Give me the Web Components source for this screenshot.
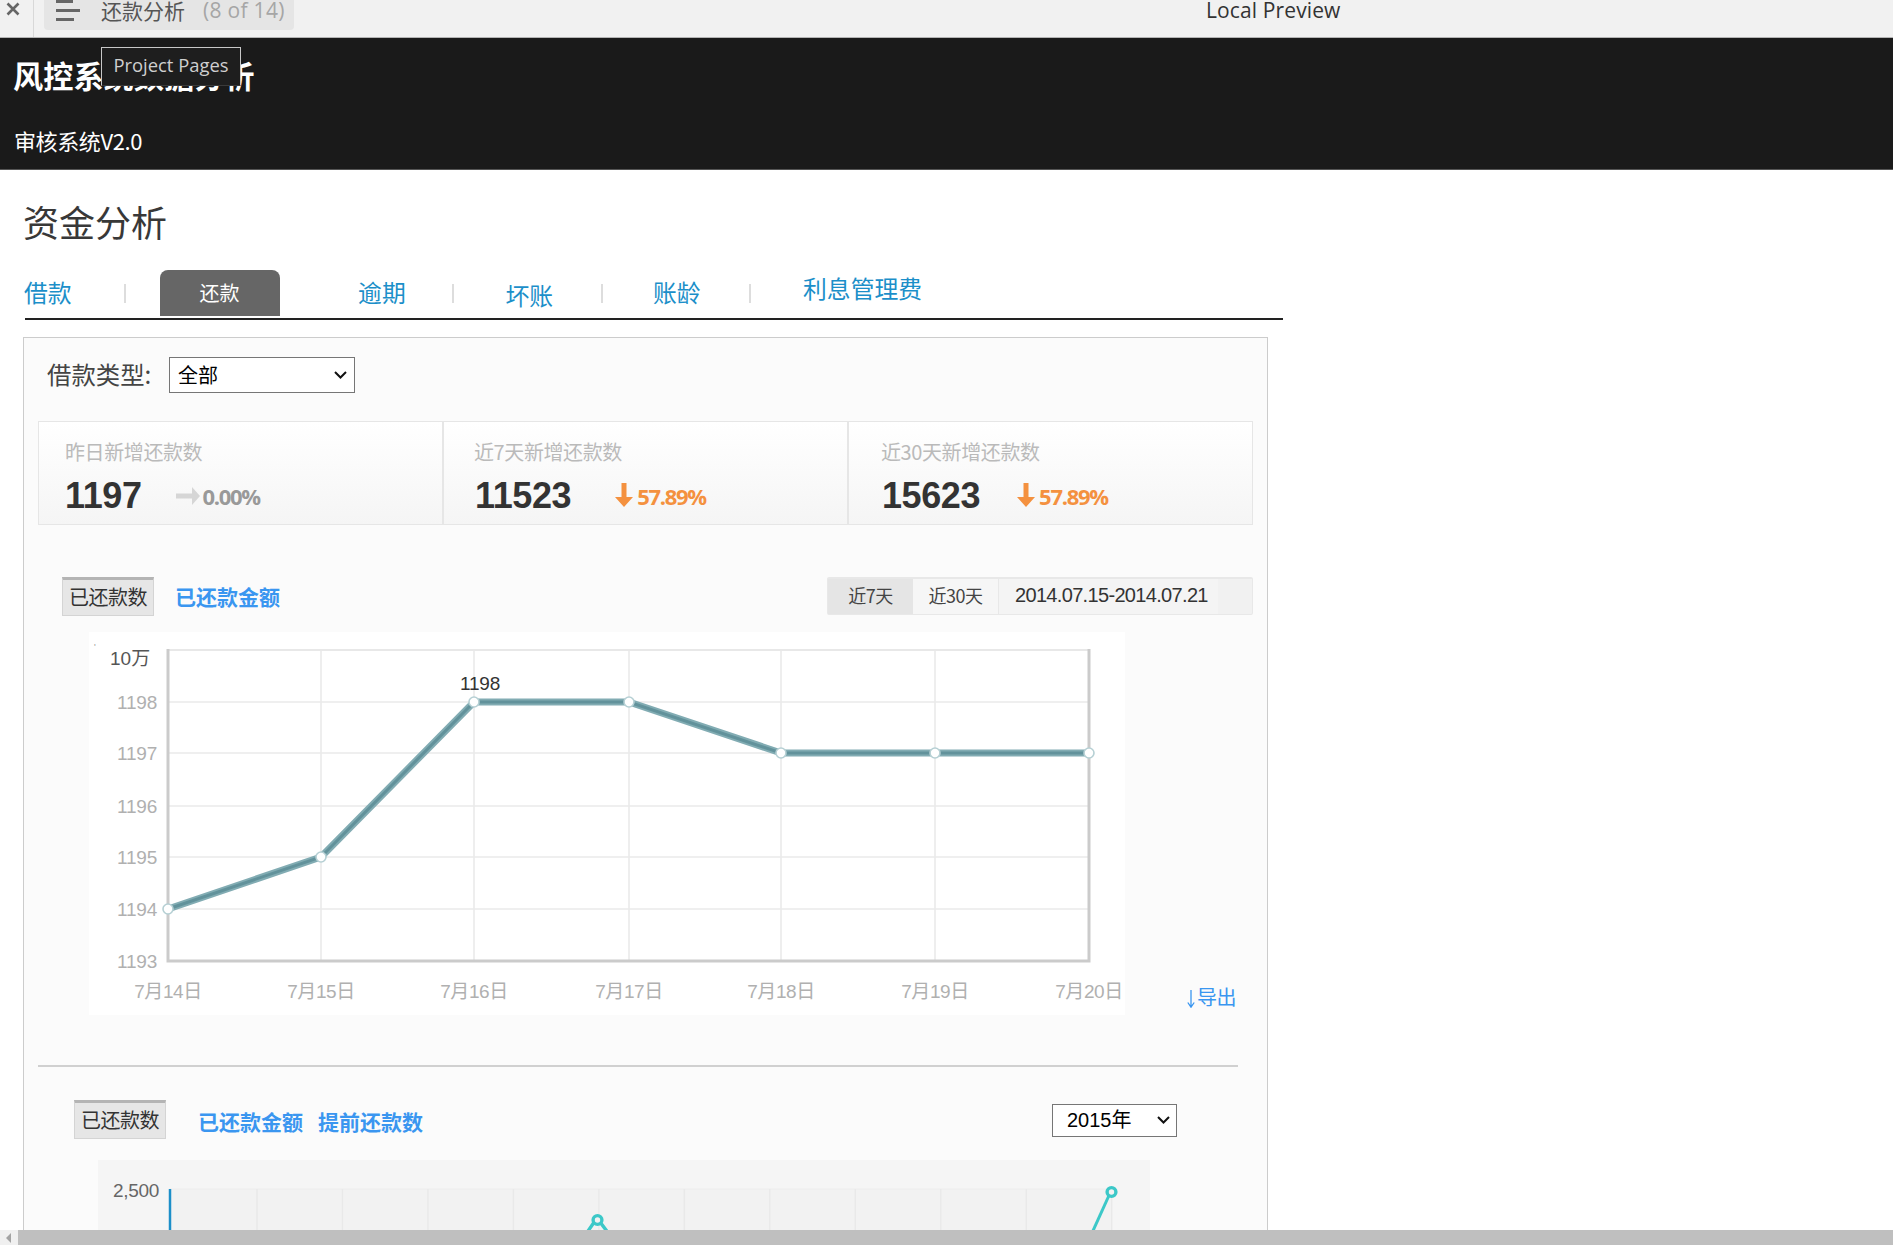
<!DOCTYPE html>
<html lang="zh-CN">
<head>
<meta charset="utf-8">
<title>还款分析</title>
<style>
  html, body { margin: 0; height: 100%; overflow: hidden; background: #fff; }
  body { font-family: "Noto Sans CJK SC", "Liberation Sans", sans-serif; }
  preview-page { display: flex; flex-direction: column; height: 100vh; }
</style>
</head>
<body>
<preview-page>
  <preview-bar title-text="还款分析" count="(8 of 14)" label="Local Preview"></preview-bar>
  <site-header title-text="风控系统数据分析" sub="审核系统V2.0" tip="Project Pages"></site-header>
  <page-body>
    <h-title>资金分析</h-title>
    <tab-strip>
      <tab-item lift="11" style="--gap:-1px">借款</tab-item>
      <tab-sep style="--gap:52.5px"></tab-sep>
      <tab-item active style="--gap:33.5px">还款</tab-item>
      <tab-item lift="11" style="--gap:78.5px">逾期</tab-item>
      <tab-sep style="--gap:46px"></tab-sep>
      <tab-item lift="8" style="--gap:51.8px">坏账</tab-item>
      <tab-sep style="--gap:48px"></tab-sep>
      <tab-item lift="11" style="--gap:49.8px">账龄</tab-item>
      <tab-sep style="--gap:49px"></tab-sep>
      <tab-item lift="15" style="--gap:51.6px">利息管理费</tab-item>
    </tab-strip>
    <main-panel>
      <filter-row label="借款类型:" value="全部"></filter-row>
      <stat-row>
        <stat-cell style="--w:405px;--pl:26px;--pm:3px;--nm:0px" label="昨日新增还款数" value="1197" trend="flat" pct="0.00%" gap="34"></stat-cell>
        <stat-cell style="--w:405px;--pl:30px" label="近7天新增还款数" value="11523" trend="down" pct="57.89%" gap="44"></stat-cell>
        <stat-cell style="--w:403px;--pl:32px" last label="近30天新增还款数" value="15623" trend="down" pct="57.89%" gap="37"></stat-cell>
      </stat-row>
      <chart-toolbar style="--top:52px;--left:24px">
        <tab-chip>已还款数</tab-chip>
        <tab-link style="--gap:21px">已还款金额</tab-link>
        <date-range slot="end"></date-range>
      </chart-toolbar>
      <line-section></line-section>
      <section-rule></section-rule>
      <chart-toolbar style="--top:33px;--left:36px">
        <tab-chip>已还款数</tab-chip>
        <tab-link style="--gap:32px;--drop:2.4px">已还款金额</tab-link>
        <tab-link style="--gap:15px;--drop:2.4px">提前还款数</tab-link>
        <year-select slot="end"></year-select>
      </chart-toolbar>
      <area-chart></area-chart>
    </main-panel>
  </page-body>
  <h-scroll></h-scroll>
</preview-page>

<script>
const CJK = '"Noto Sans CJK SC", "Liberation Sans", sans-serif';
const ARIAL = '"Liberation Sans", "Noto Sans CJK SC", sans-serif';
const OPEN = '"Open Sans", "Noto Sans CJK SC", sans-serif';
const CHEVRON = `<svg class="chev" width="13" height="8" viewBox="0 0 13 8"><path d="M1 1l5.5 5.5L12 1" fill="none" stroke="#111" stroke-width="2"/></svg>`;

function def(name, html) {
  customElements.define(name, class extends HTMLElement {
    connectedCallback() {
      if (this.shadowRoot) return;
      const root = this.attachShadow({ mode: 'open' });
      const attr = (k, d = '') => this.getAttribute(k) ?? d;
      root.innerHTML = typeof html === 'function' ? html(attr, this) : html;
    }
  });
}

def('preview-bar', a => `
<style>
  :host { display:flex; align-items:flex-start; height:37px; flex:none; background:#f1f1f1; border-bottom:1px solid #b4b4b4; font-family:${OPEN}; }
  .close { width:27px; height:35px; padding:2px 0 0 6px; border-right:1px solid #d8d8d8; }
  .close svg { display:block; }
  .pill { margin-left:10px; width:250px; height:30px; background:#e5e5e5; border-radius:0 0 4px 4px; display:flex; align-items:center; }
  .pill svg { margin-left:12px; flex:none; }
  .t { margin-left:21px; font-size:21px; line-height:20px; color:#555; font-family:${CJK}; margin-top:-10px; }
  .c { margin-left:18px; font-size:21px; line-height:20px; color:#a6a6a6; margin-top:-10px; letter-spacing:.3px; }
  .l { margin-left:912px; font-size:21px; line-height:20px; color:#333; letter-spacing:.12px; }
</style>
<div class="close"><svg width="14" height="14" viewBox="0 0 14 14"><path d="M1.5 1.5 L12.5 12.5 M12.5 1.5 L1.5 12.5" stroke="#666" stroke-width="2.6"/></svg></div>
<div class="pill">
  <svg width="24" height="24" viewBox="0 0 24 24" style="margin-top:-6px"><rect x="0" y="0" width="17" height="3" fill="#666"/><rect x="0" y="9" width="24" height="3" fill="#666"/><rect x="0" y="18" width="18" height="3" fill="#666"/></svg>
  <span class="t">${a('title-text')}</span><span class="c">${a('count')}</span>
</div>
<span class="l">${a('label')}</span>`);

def('site-header', a => `
<style>
  :host { display:block; flex:none; height:131px; background:#1a1a1a; border-bottom:1px solid #555; position:relative; color:#fff; padding-left:13px; }
  .t { font:700 30.2px/40px ${CJK}; padding-top:17px; }
  .s { font:400 22px/24px ${CJK}; padding-top:33px; letter-spacing:-.4px; margin-left:1px; }
  .tip { position:absolute; left:101px; top:9px; width:138px; height:37px; background:#1e1e1e; border:1px solid #c8c8c8; border-bottom-color:#3a3a3a; font:18.4px/34px ${OPEN}; color:#cfcfcf; text-align:center; }
</style>
<div class="t">${a('title-text')}</div>
<div class="s">${a('sub')}</div>
<div class="tip">${a('tip')}</div>`);

def('page-body', `
<style>:host { display:block; flex:1; min-height:0; overflow:hidden; padding-left:23px; background:#fff; }</style>
<slot></slot>`);

def('h-title', `
<style>:host { display:block; font:400 36px/40px ${CJK}; color:#383838; padding-top:30.5px; }</style><slot></slot>`);

def('tab-strip', `
<style>:host { display:flex; align-items:flex-end; height:49px; width:1258px; margin-left:2px; margin-top:28.5px; border-bottom:2px solid #222; }</style><slot></slot>`);

def('tab-item', (a, el) => {
  const active = el.hasAttribute('active');
  return `<style>
  :host { display:block; margin-left:var(--gap,0); font-family:${CJK}; }
  .p { font-size:23.8px; line-height:30px; color:#1c8fc9; padding-bottom:${a('lift','10')}px; }
  .a { width:120px; height:46px; margin-bottom:2px; background:#666; color:#fff; border-radius:8px 8px 0 0; font-size:20px; line-height:45px; text-align:center; }
  </style><div class="${active ? 'a' : 'p'}"><slot></slot></div>`;
});

def('tab-sep', `
<style>:host { display:block; width:2px; height:19px; background:#ddd; margin-left:var(--gap,0); margin-bottom:15px; }</style>`);

def('main-panel', `
<style>:host { display:block; box-sizing:border-box; width:1245px; margin-top:16.5px; border:1px solid #ccc; background:#fbfbfb; padding:19px 14px 0; height:1000px; }</style><slot></slot>`);

const selectStyle = `
  .wrap { position:relative; display:block; }
  select { appearance:none; -webkit-appearance:none; display:block; color:#000; background:#fff; border:1px solid #767676; border-radius:0; box-sizing:border-box; }
  .chev { position:absolute; top:50%; margin-top:-4px; pointer-events:none; }`;

def('filter-row', a => `
<style>
  :host { display:flex; align-items:center; height:36px; padding-left:9px; font-family:${CJK}; }
  .l { font-size:24.4px; color:#444; width:122px; line-height:36px; white-space:nowrap; margin-top:-2px; }
  ${selectStyle}
  select { width:186px; height:36px; font:20px ${CJK}; padding-left:8px; }
  .chev { right:8px; }
</style>
<span class="l">${a('label')}</span><span class="wrap"><select><option>${a('value')}</option></select>${CHEVRON}</span>`);

def('stat-row', `
<style>:host { display:flex; margin-top:28px; height:104px; box-sizing:border-box; width:1215px; border:1px solid #e6e6e6; background:linear-gradient(#fff,#f5f5f5); }</style><slot></slot>`);

const ORANGE = '#f4913f';
const arrows = {
  down: `<svg width="18" height="24" viewBox="0 0 18 24" style="margin-top:-2px"><path d="M6.5 0h5v14h6.5L9 24 0 14h6.5z" fill="${ORANGE}"/></svg>`,
  flat: `<svg width="24" height="18" viewBox="0 0 24 18"><path d="M0 6.5h16V0l8 9-8 9v-6.5H0z" fill="#d6d6d6"/></svg>`
};
def('stat-cell', (a, el) => `
<style>
  :host { display:block; box-sizing:border-box; width:var(--w); padding-left:var(--pl); ${el.hasAttribute('last') ? '' : 'border-right:2px solid #e6e6e6;'} }
  .l { font:400 20px/26px ${CJK}; color:#bababa; padding-top:17px; letter-spacing:-.4px; }
  .r { display:flex; align-items:center; height:40px; margin-top:11px; }
  .v { font:700 36px/40px ${ARIAL}; color:#333; letter-spacing:-.4px; margin-left:var(--nm,1px); }
  .t { display:flex; align-items:center; margin-left:${a('gap')}px; }
  .p { font:700 22px/24px "Open Sans", "Liberation Sans", sans-serif; margin-left:var(--pm,4px); letter-spacing:-1.3px; color:${a('trend') === 'flat' ? '#999' : ORANGE}; margin-top:0; }
</style>
<div class="l">${a('label')}</div>
<div class="r"><span class="v">${a('value')}</span><span class="t">${arrows[a('trend')]}<span class="p">${a('pct')}</span></span></div>`);

def('chart-toolbar', `
<style>:host { display:flex; align-items:flex-start; margin-top:var(--top); padding-left:var(--left); height:39px; }
.e { margin-left:auto; display:block; } </style><slot></slot><div class="e"><slot name="end"></slot></div>`);

def('tab-chip', `
<style>:host { display:block; box-sizing:border-box; width:92px; height:39px; background:#e6e6e6; border:1px solid #d4d4d4; border-top:3px solid #b4b4b4; font:400 20px/34px ${CJK}; color:#333; text-align:center; letter-spacing:-.5px; white-space:nowrap; }</style><slot></slot>`);

def('tab-link', `
<style>:host { display:block; margin-left:var(--gap,0); margin-top:var(--drop,0); font:700 21px/39px ${CJK}; color:#3a96f0; white-space:nowrap; }</style><slot></slot>`);

def('date-range', `
<style>
  :host { display:flex; width:426px; height:38px; box-sizing:border-box; background:#f1f1f1; border:1px solid #e8e8e8; border-top-width:2px; border-radius:2px; font-family:${CJK}; color:#444; }
  .c { display:block; text-align:center; font-size:18px; line-height:33px; letter-spacing:-.5px; }
  .a { width:85px; background:#e5e5e5; }
  .b { width:85px; background:#f6f6f6; }
  .d { flex:1; font:20px/33px ${ARIAL}; color:#333; padding-left:16px; background:linear-gradient(90deg,#f4f4f4 90%,#f1f1f1 90%); letter-spacing:-.67px; border-left:1px solid #e8e8e8; margin-right:10px; }
</style>
<span class="c a">近7天</span><span class="c b">近30天</span><span class="d">2014.07.15-2014.07.21</span>`);

def('year-select', `
<style>
  :host { display:block; margin-right:76px; margin-top:4px; }
  ${selectStyle}
  select { width:125px; height:33px; font:20px ${ARIAL}; padding-left:14px; }
  .chev { right:7px; }
</style>
<span class="wrap"><select><option>2015年</option></select>${CHEVRON}</span>`);

const xs = [168, 321, 474, 629, 781, 935, 1089];
const ys = [702, 753, 806, 857, 909, 961];
const pts = [[168, 909], [321, 857], [474, 702], [629, 702], [781, 753], [935, 753], [1089, 753]];
const poly = pts.map(p => p.join(',')).join(' ');

def('line-section', `
<style>
  :host { display:flex; align-items:flex-end; margin-top:16px; padding-left:51px; height:383px; }
  svg { display:block; flex:none; }
  text { font-family:${ARIAL}; }
  .e { display:flex; align-items:center; font:400 20px/24px ${CJK}; color:#3a96f0; margin-left:62px; margin-bottom:6px; letter-spacing:-.4px; white-space:nowrap; }
  .e svg { margin-right:2px; margin-top:4px; }
</style>
<svg width="1036" height="383" viewBox="89 632 1036 383">
  <rect x="89" y="632" width="1036" height="383" fill="#fff"/>
  ${xs.slice(1, 6).map(x => `<line x1="${x}" x2="${x}" y1="650" y2="961" stroke="#e8e8e8" stroke-width="1.5"/>`).join('')}
  ${ys.slice(0, 5).map(y => `<line x1="168" x2="1089" y1="${y}" y2="${y}" stroke="#eaeaea" stroke-width="1.5"/>`).join('')}
  <line x1="168" x2="1089" y1="650" y2="650" stroke="#e8e8e8" stroke-width="2"/>
  <path d="M168 649V961H1089V649" fill="none" stroke="#cbcbcb" stroke-width="3"/>
  <polyline points="${poly}" fill="none" stroke="#82acb3" stroke-width="7" stroke-linejoin="round"/>
  <polyline points="${poly}" fill="none" stroke="#62929b" stroke-width="3"/>
  ${pts.map(p => `<circle cx="${p[0]}" cy="${p[1]}" r="5" fill="#fff" stroke="#b6d0d4" stroke-width="1.6"/>`).join('')}
  ${[1198, 1197, 1196, 1195, 1194, 1193].map((t, i) => `<text x="157" y="${ys[i] + 7}" text-anchor="end" font-size="19" letter-spacing="-.2" fill="#b0b0b0">${t}</text>`).join('')}
  <text x="110" y="665" font-size="19" fill="#555">10万</text>
  <text x="94" y="650" font-size="9" fill="#999">'</text>
  <text x="480" y="690" text-anchor="middle" font-size="19" letter-spacing="-.2" fill="#333">1198</text>
  ${xs.map((x, i) => `<text x="${x}" y="998" text-anchor="middle" font-size="19" fill="#b0b0b0" letter-spacing="-.4">7月${14 + i}日</text>`).join('')}
</svg>
<span class="e"><svg width="8" height="18" viewBox="0 0 8 18"><path d="M4 0V16M.8 12.5L4 17.2 7.2 12.5" fill="none" stroke="#3a96f0" stroke-width="1.3"/></svg>导出</span>`);

def('section-rule', `
<style>:host { display:block; height:2px; background:#d0d0d0; margin-top:50px; width:1200px; }</style>`);

const gx = Array.from({ length: 11 }, (_, i) => 257 + i * 85.47);
def('area-chart', `
<style>
  :host { display:block; margin-top:21px; margin-left:60px; width:1052px; height:70px; }
  svg { display:block; }
  text { font-family:${ARIAL}; }
</style>
<svg width="1052" height="70" viewBox="98 1158 1052 70">
  <rect x="98" y="1158" width="1052" height="70" fill="#f5f5f5"/>
  <rect x="170" y="1187" width="941" height="41" fill="#f2f2f2"/>
  <line x1="170" x2="1111" y1="1187" y2="1187" stroke="#ececec"/>
  ${gx.map(x => `<line x1="${x}" x2="${x}" y1="1187" y2="1228" stroke="#e9e9e9" stroke-width="1.4"/>`).join('')}
  <line x1="170" x2="170" y1="1187" y2="1228" stroke="#1c8fc9" stroke-width="2.5"/>
  <text x="159" y="1195" text-anchor="end" font-size="19" fill="#666" letter-spacing="-.3">2,500</text>
  <path d="M1092 1231 L1111 1189" fill="none" stroke="#3cc8c8" stroke-width="3"/>
  <circle cx="1111.5" cy="1190" r="4.4" fill="#f2f2f2" stroke="#3cc8c8" stroke-width="3.4"/>
  <path d="M586 1232 L597 1216 L609 1232" fill="none" stroke="#3cc8c8" stroke-width="3.4"/>
  <circle cx="597.5" cy="1218" r="4.4" fill="#f2f2f2" stroke="#3cc8c8" stroke-width="3.4"/>
</svg>`);

def('h-scroll', `
<style>
  :host { display:flex; flex:none; height:15px; background:#f0f0f0; }
  .b { width:18px; display:flex; align-items:center; justify-content:center; }
  .t { flex:1; background:#bfbfbf; }
</style>
<div class="b"><svg width="6" height="10" viewBox="0 0 6 10"><path d="M5 0v10L0 5z" fill="#a3a3a3"/></svg></div><div class="t"></div>`);
</script>
</body>
</html>
